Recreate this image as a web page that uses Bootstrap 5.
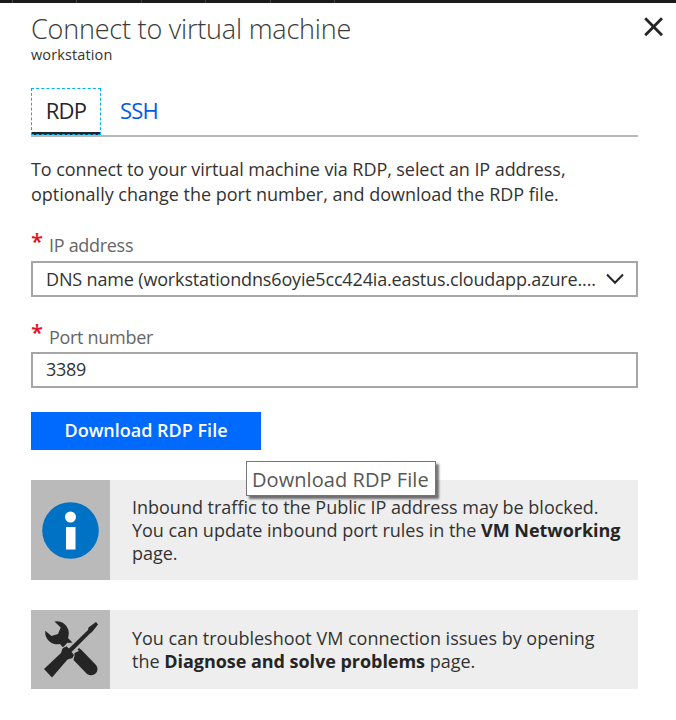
<!DOCTYPE html>
<html lang="en">
<head>
<meta charset="utf-8">
<meta name="viewport" content="width=device-width, initial-scale=1">
<title>Connect to virtual machine</title>
<link href="https://cdn.jsdelivr.net/npm/bootstrap@5.3.0/dist/css/bootstrap.min.css" rel="stylesheet">
<style>
body{font-family:"Open Sans","Noto Sans",sans-serif;color:#333;background:#fff;font-size:18px;height:720px;overflow:hidden}
.topline{height:3px;background:#1b1919;padding-left:12px}
.topline span{height:3px;border-left:1px solid #444}
.seg-a{width:64px}.seg-b{width:65px}
.blade{padding:0 38px 0 31px}
.blade-head{height:85px;margin-right:-26px}
.blade-title{font-size:27px;font-weight:300;line-height:36px;margin:8px 0 0;white-space:nowrap;letter-spacing:-.2px;color:#3a3a3a}
.blade-sub{font-size:14.5px;line-height:20px;margin-top:-2px;letter-spacing:.12px}
.close-x{width:20px;height:20px;margin-top:14px}
.tabs{height:49px;border-bottom:2px solid #b8b8b8;font-size:22px;letter-spacing:-.8px}
.tabs .nav-link{padding:0 0 0 19px;line-height:44px;color:#015cda}
.tabs .nav-link.active{width:70px;height:47px;padding:0;line-height:42px;color:#252525;border:1px dashed #00b4f0;background:linear-gradient(#252525,#252525) bottom/100% 3px no-repeat border-box;text-align:center}
.intro{line-height:25px;margin:20px 0 0;height:75px;letter-spacing:-.07px}
.intro span{letter-spacing:-.01px}
.field-label{height:29px;line-height:27px;color:#666;letter-spacing:-.3px}
.port-group .field-label{line-height:29px}
.star,.port-group .star{width:18px;color:#e81123;flex:none;font-size:22px;font-weight:600;line-height:16px}
.box,.box:focus{height:36px;border:2px solid #a6a6a6;border-radius:0;padding:0 12.500px 0 13px;font-size:18px;line-height:31px;color:#333;letter-spacing:-.155px;box-shadow:none;background:#fff}
.port-box,.port-box:focus{letter-spacing:-.3px;padding-bottom:2px}
.port-group{margin-top:26px}
.chev{width:18px;height:12px}
.btn-dl,.btn-dl:hover{width:230px;height:38px;border-radius:0;background:#006aff;color:#fff;font-weight:600;font-size:18px;line-height:36px;padding:0 0 2px;border:0}
.note{background:#eee;line-height:23px;margin-top:30px;letter-spacing:-.01px}
.note-lg{height:100px}
.note-sm{height:79px}
.note-icon{width:79px;background:#bababa;flex:none}
.note-text{padding:16px 0 0 22px;white-space:nowrap}
.note-sm .note-text{padding-top:17px}
.note b{font-weight:700;letter-spacing:-.04px;color:#252525}
.tip{position:absolute;left:246px;top:461px;width:190px;height:35px;background:#fff;border:1px solid #767676;box-shadow:3px 3px 2px #0008;color:#575757;font-size:20px;line-height:35px;padding-left:5px;white-space:nowrap;letter-spacing:.06px}
</style>
</head>
<body class="position-relative">
<div class="topline d-flex"><span class="seg-a"></span><span class="seg-b"></span><span class="seg-a"></span><span class="seg-b"></span><span class="seg-a"></span><span></span></div>
<main class="blade">
  <header class="blade-head d-flex justify-content-between">
    <div>
      <h1 class="blade-title">Connect to virtual machine</h1>
      <div class="blade-sub">workstation</div>
    </div>
    <svg class="close-x" viewBox="0 0 20 20" fill="none" stroke="#252525" stroke-width="2.8"><path d="M1.200 1.200 18 18.200M18 1.200 1.200 18.200"/></svg>
  </header>
  <nav class="tabs nav flex-nowrap">
    <a class="nav-link active" href="#">RDP</a>
    <a class="nav-link" href="#">SSH</a>
  </nav>
  <p class="intro">To connect to your virtual machine via RDP, select an IP address,<br><span>optionally change the port number, and download the RDP file.</span></p>
  <div class="field-label d-flex"><span class="star">*</span>IP address</div>
  <div class="box d-flex justify-content-between align-items-center" role="combobox" tabindex="0">
    <span class="text-nowrap">DNS name (workstationdns6oyie5cc424ia.eastus.cloudapp.azure....</span>
    <svg class="chev flex-shrink-0" viewBox="0 0 18 12" fill="none" stroke="#252525" stroke-width="2"><path d="M1 1.500 9 9.800 17 1.500"/></svg>
  </div>
  <div class="port-group">
    <label class="field-label d-flex" for="port"><span class="star">*</span>Port number</label>
    <input class="form-control box port-box" id="port" type="text" value="3389">
  </div>
  <button class="btn btn-dl d-block mt-4" type="button">Download RDP File</button>
  <div class="note note-lg d-flex">
    <div class="note-icon d-flex align-items-center justify-content-center">
      <svg width="57" height="57" viewBox="0 0 57 57"><circle cx="28.500" cy="28.500" r="28.300" fill="#0072c6"/><circle cx="28.500" cy="15" r="5.500" fill="#fff"/><path d="M24 25h9.500v22.500H24z" fill="#fff"/></svg>
    </div>
    <div class="note-text">Inbound traffic to the Public IP address may be blocked.<br>You can update inbound port rules in the <b>VM Networking</b><br>page.</div>
  </div>
  <div class="note note-sm d-flex">
    <div class="note-icon">
      <svg width="79" height="79" viewBox="0 0 79 79" fill="#252525">
        <path d="M23.500 11.500A12 12 0 0 1 37.500 26L37 28 41.500 32.500 37 33 33 36.500 31.500 37 29 34A12 12 0 0 1 14.300 20.800L20.500 26 27 24 29.700 17.500Z"/>
        <path d="M43.500 46 43.500 43 48 41 46.500 39.500 48 38 50.500 40 65 55C69.500 61 63 68 56 64L42.500 50Z"/>
        <path d="M13 59 30 43 31.500 38.500 35 36 38 38.500 57 20 57.500 17.500 65 12 67 14.500 61 22 59 23.500 40.500 42 43 45 41.500 48 36.500 49.500 21 67.500Z"/>
        <path d="M33.500 37 36.500 33.500 41 34" fill="none" stroke="#bababa" stroke-width="1.300"/>
      </svg>
    </div>
    <div class="note-text">You can troubleshoot VM connection issues by opening<br>the <b>Diagnose and solve problems</b> page.</div>
  </div>
</main>
<div class="tip">Download RDP File</div>
<script src="https://cdn.jsdelivr.net/npm/bootstrap@5.3.0/dist/js/bootstrap.bundle.min.js"></script>
</body>
</html>
